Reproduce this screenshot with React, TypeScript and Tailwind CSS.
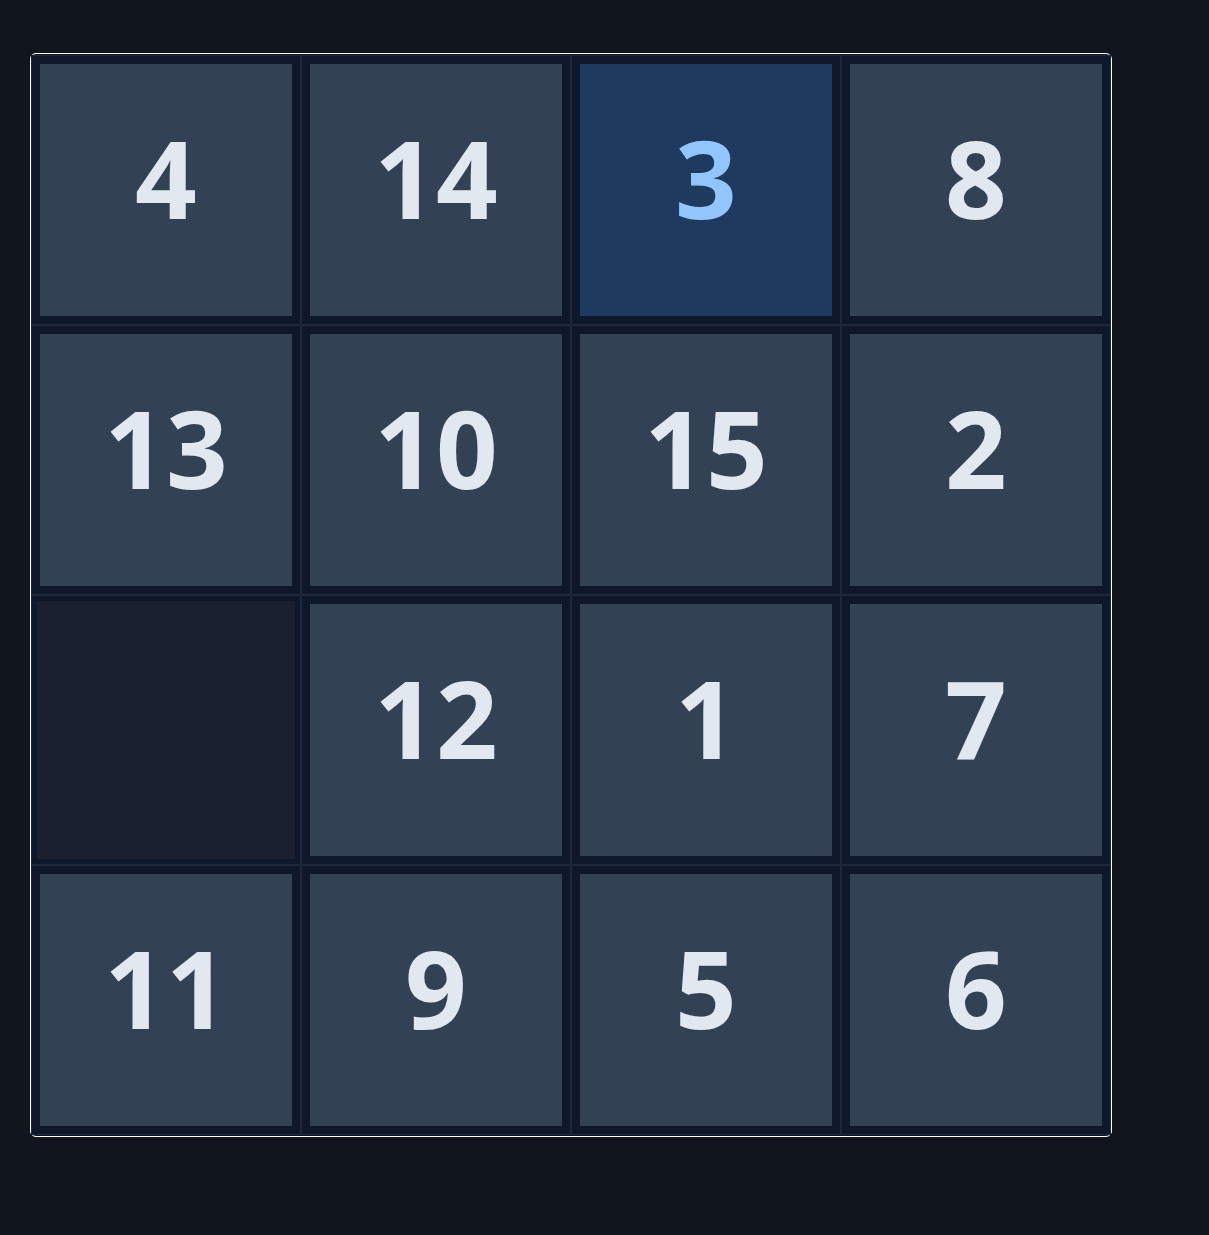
import React from 'react';

// 15-puzzle board state, row by row; null marks the open slot
const board: (number | null)[] = [4, 14, 3, 8, 13, 10, 15, 2, null, 12, 1, 7, 11, 9, 5, 6];
const selected = 3;

const Tile: React.FC<{ value: number | null }> = ({ value }) => {
  if (value === null) {
    return (
      <div className="w-[270px] h-[270px] border border-[#1e2638] p-[5px]">
        <div className="w-full h-full bg-[#1a1f2f]" />
      </div>
    );
  }

  const active = value === selected;

  return (
    <div className="w-[270px] h-[270px] border border-[#1e2638] p-2">
      <div
        className={
          active
            ? 'w-full h-full bg-[#1e3a5f] text-[#93c5fd] flex items-center justify-center'
            : 'w-full h-full bg-[#334155] text-[#e2e8f0] flex items-center justify-center'
        }
      >
        <span className="text-[108px] font-bold leading-none pb-6 font-['Open_Sans',sans-serif]">{value}</span>
      </div>
    </div>
  );
};

export default function App() {
  return (
    <div className="min-h-screen bg-[#11151d] pl-[30px] pt-[53px]">
      <div className="w-[1082px] border border-white rounded-md bg-[#0f172a] py-px">
        <div className="grid grid-cols-4">
          {board.map((value, i) => (
            <Tile key={i} value={value} />
          ))}
        </div>
      </div>
    </div>
  );
}
